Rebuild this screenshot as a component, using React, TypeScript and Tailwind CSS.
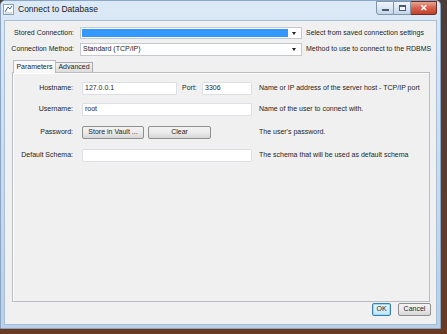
import React from "react";

const F = '"Liberation Sans", Arial, sans-serif';

function Combo({ value, selected, h }: { value?: string; selected?: boolean; h: number }) {
  return (
    <div
      className="w-[222px] flex items-stretch bg-white border border-[#c5c9d1] p-[1px]"
      style={{ height: h }}
    >
      <div
        className={`flex-1 flex items-center pl-[1px] text-[7px] ${selected ? "bg-[#3399ff]" : "bg-white text-[#1e1e1e]"}`}
      >
        {value}
      </div>
      <div className="w-[12px] flex items-center justify-center">
        <div className="w-0 h-0 border-l-[2.5px] border-r-[2.5px] border-t-[3px] border-l-transparent border-r-transparent border-t-[#222]" />
      </div>
    </div>
  );
}

function Input({ w, value }: { w: number; value?: string }) {
  return (
    <div
      className="h-[13px] bg-white border border-[#dcdfe4] rounded-[1px] flex items-center pl-[2px] text-[7px] text-[#1e1e1e]"
      style={{ width: w }}
    >
      {value}
    </div>
  );
}

function Btn({ w, label, def }: { w: number; label: string; def?: boolean }) {
  return (
    <div
      className={`h-[13px] rounded-[2px] border flex items-center justify-center text-[7px] text-[#1e1e1e] ${
        def
          ? "border-[#3c7fb1] bg-gradient-to-b from-[#eaf6fd] to-[#bee6fd] shadow-[inset_0_0_0_1px_#9ad9f7]"
          : "border-[#8e8f8f] bg-gradient-to-b from-[#f2f2f2] via-[#ebebeb] to-[#d6d6d6]"
      }`}
      style={{ width: w }}
    >
      {label}
    </div>
  );
}

export default function App() {
  return (
    <div
      className="w-[447px] h-[334px] bg-gradient-to-b from-[#4b3d3a] to-[#6a3a22] flex items-start"
      style={{ fontFamily: F }}
    >
      <div className="w-[441px] h-[329px] rounded-t-[5px] border border-[#8aa6c4] bg-gradient-to-b from-[#dce9f6] via-[#c9dcf0] to-[#b8d0ea] flex flex-col">
        {/* Title bar */}
        <div className="h-[18px] flex items-start">
          <div className="mt-[3px] ml-[2px] w-[11px] h-[11px] bg-white border border-[#8aa0b8] flex items-center justify-center">
            <svg width="9" height="9" viewBox="0 0 9 9">
              <path d="M1 7 L4 2 L6 4 L8 1" stroke="#3a6ea5" strokeWidth="1" fill="none" />
              <path d="M1 8 H8" stroke="#9ab" strokeWidth="0.8" />
            </svg>
          </div>
          <div className="ml-[4px] mt-[3px] text-[8.5px] leading-[11px] text-[#1a1a1a]">Connect to Database</div>
          <div className="ml-auto flex mr-[3px]">
            <div className="w-[18px] h-[14px] border border-[#7f93ab] rounded-bl-[3px] bg-gradient-to-b from-[#f0f5fb] via-[#dbe6f3] to-[#c3d5ea] flex items-end justify-center pb-[3px]">
              <div className="w-[7px] h-[2px] bg-white border border-[#4d5a6a]" />
            </div>
            <div className="w-[17px] h-[14px] border-y border-r border-[#7f93ab] bg-gradient-to-b from-[#f0f5fb] via-[#dbe6f3] to-[#c3d5ea] flex items-center justify-center">
              <div className="w-[7px] h-[6px] border border-[#4d5a6a] bg-white/60 shadow-[inset_0_1px_0_#4d5a6a]" />
            </div>
            <div className="w-[26px] h-[14px] border-y border-r border-[#6b2d25] rounded-br-[3px] bg-gradient-to-b from-[#e8a493] via-[#d2604c] to-[#c4412c] flex items-center justify-center">
              <span className="text-white text-[9px] font-bold leading-none">✕</span>
            </div>
          </div>
        </div>

        {/* Client */}
        <div className="ml-[3px] mr-[3px] mb-[3px] mt-[1px] flex-1 bg-[#f0f0f0] border border-[#a9bfd6] flex flex-col text-[7px] text-[#1e1e1e]">
          {/* Stored connection */}
          <div className="mt-[6px] flex items-center">
            <div className="w-[69px] text-right">Stored Connection:</div>
            <div className="ml-[6px]">
              <Combo selected h={12} />
            </div>
            <div className="ml-[4px]">Select from saved connection settings</div>
          </div>
          <div className="mt-[4px] flex items-center">
            <div className="w-[69px] text-right">Connection Method:</div>
            <div className="ml-[6px]">
              <Combo value="Standard (TCP/IP)" h={13} />
            </div>
            <div className="ml-[4px]">Method to use to connect to the RDBMS</div>
          </div>

          {/* Tabs */}
          <div className="mt-[4px] ml-[8px] flex items-end h-[12px] relative z-10">
            <div className="w-[43px] h-[13px] -mb-[1px] bg-[#f9f9f9] border border-b-0 border-[#b9bcc2] flex items-center justify-center">
              Parameters
            </div>
            <div className="w-[37px] h-[10px] bg-gradient-to-b from-[#f2f2f2] to-[#dddddd] border border-l-0 border-b-0 border-[#a8abb1] flex items-center justify-center">
              Advanced
            </div>
          </div>

          {/* Panel */}
          <div className="ml-[7px] w-[418px] h-[230px] border border-[#b9bcc2] bg-[#f0f0f0] shadow-[inset_1px_1px_0_#ffffff] flex flex-col">
            <div className="mt-[9px] flex items-center">
              <div className="w-[60px] text-right">Hostname:</div>
              <div className="ml-[9px]">
                <Input w={95} value="127.0.0.1" />
              </div>
              <div className="ml-[5px] w-[20px]">Port:</div>
              <Input w={50} value="3306" />
              <div className="ml-[7px]">Name or IP address of the server host - TCP/IP port</div>
            </div>
            <div className="mt-[8px] flex items-center">
              <div className="w-[60px] text-right">Username:</div>
              <div className="ml-[9px]">
                <Input w={170} value="root" />
              </div>
              <div className="ml-[7px]">Name of the user to connect with.</div>
            </div>
            <div className="mt-[10px] flex items-center">
              <div className="w-[60px] text-right">Password:</div>
              <div className="ml-[9px] flex gap-[4px]">
                <Btn w={62} label="Store in Vault ..." />
                <Btn w={63} label="Clear" />
              </div>
              <div className="ml-[48px]">The user's password.</div>
            </div>
            <div className="mt-[10px] flex items-center">
              <div className="w-[60px] text-right">Default Schema:</div>
              <div className="ml-[9px]">
                <Input w={170} />
              </div>
              <div className="ml-[7px]">The schema that will be used as default schema</div>
            </div>
          </div>

          {/* Bottom buttons */}
          <div className="mt-[1px] flex justify-end gap-[7px] pr-[5px]">
            <Btn w={19} label="OK" def />
            <Btn w={33} label="Cancel" />
          </div>
        </div>
      </div>
    </div>
  );
}
